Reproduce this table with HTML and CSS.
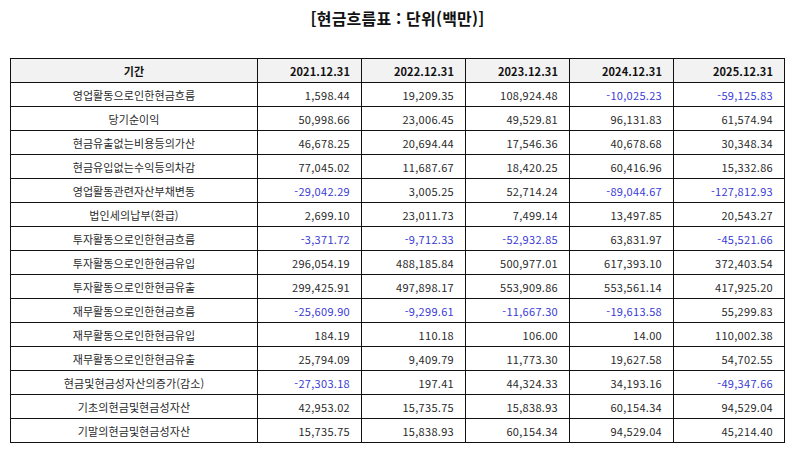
FILE: index.html
```html
<!DOCTYPE html>
<html lang="ko">
<head>
<meta charset="utf-8">
<title>현금흐름표</title>
<link rel="stylesheet" href="styles.css">
</head>
<body>
<div class="page">
  <h1 class="title">[현금흐름표 : 단위(백만)]</h1>
  <table class="cf">
    <colgroup>
      <col class="c-label"><col class="c-y"><col class="c-y"><col class="c-y"><col class="c-y"><col class="c-last">
    </colgroup>
    <thead>
      <tr><th class="lbl">기간</th><th>2021.12.31</th><th>2022.12.31</th><th>2023.12.31</th><th>2024.12.31</th><th>2025.12.31</th></tr>
    </thead>
    <tbody>
      <tr><td class="lbl">영업활동으로인한현금흐름</td><td>1,598.44</td><td>19,209.35</td><td>108,924.48</td><td class="neg">-10,025.23</td><td class="neg">-59,125.83</td></tr>
      <tr><td class="lbl">당기순이익</td><td>50,998.66</td><td>23,006.45</td><td>49,529.81</td><td>96,131.83</td><td>61,574.94</td></tr>
      <tr><td class="lbl">현금유출없는비용등의가산</td><td>46,678.25</td><td>20,694.44</td><td>17,546.36</td><td>40,678.68</td><td>30,348.34</td></tr>
      <tr><td class="lbl">현금유입없는수익등의차감</td><td>77,045.02</td><td>11,687.67</td><td>18,420.25</td><td>60,416.96</td><td>15,332.86</td></tr>
      <tr><td class="lbl">영업활동관련자산부채변동</td><td class="neg">-29,042.29</td><td>3,005.25</td><td>52,714.24</td><td class="neg">-89,044.67</td><td class="neg">-127,812.93</td></tr>
      <tr><td class="lbl">법인세의납부(환급)</td><td>2,699.10</td><td>23,011.73</td><td>7,499.14</td><td>13,497.85</td><td>20,543.27</td></tr>
      <tr><td class="lbl">투자활동으로인한현금흐름</td><td class="neg">-3,371.72</td><td class="neg">-9,712.33</td><td class="neg">-52,932.85</td><td>63,831.97</td><td class="neg">-45,521.66</td></tr>
      <tr><td class="lbl">투자활동으로인한현금유입</td><td>296,054.19</td><td>488,185.84</td><td>500,977.01</td><td>617,393.10</td><td>372,403.54</td></tr>
      <tr><td class="lbl">투자활동으로인한현금유출</td><td>299,425.91</td><td>497,898.17</td><td>553,909.86</td><td>553,561.14</td><td>417,925.20</td></tr>
      <tr><td class="lbl">재무활동으로인한현금흐름</td><td class="neg">-25,609.90</td><td class="neg">-9,299.61</td><td class="neg">-11,667.30</td><td class="neg">-19,613.58</td><td>55,299.83</td></tr>
      <tr><td class="lbl">재무활동으로인한현금유입</td><td>184.19</td><td>110.18</td><td>106.00</td><td>14.00</td><td>110,002.38</td></tr>
      <tr><td class="lbl">재무활동으로인한현금유출</td><td>25,794.09</td><td>9,409.79</td><td>11,773.30</td><td>19,627.58</td><td>54,702.55</td></tr>
      <tr><td class="lbl">현금및현금성자산의증가(감소)</td><td class="neg">-27,303.18</td><td>197.41</td><td>44,324.33</td><td>34,193.16</td><td class="neg">-49,347.66</td></tr>
      <tr><td class="lbl">기초의현금및현금성자산</td><td>42,953.02</td><td>15,735.75</td><td>15,838.93</td><td>60,154.34</td><td>94,529.04</td></tr>
      <tr><td class="lbl">기말의현금및현금성자산</td><td>15,735.75</td><td>15,838.93</td><td>60,154.34</td><td>94,529.04</td><td>45,214.40</td></tr>
    </tbody>
  </table>
</div>
</body>
</html>
```

FILE: styles.css
```css
html, body {
  margin: 0;
  padding: 0;
  background: #ffffff;
}
body {
  font-family: "Noto Sans CJK KR", "Noto Sans", sans-serif;
  color: #2a2a2a;
}
.page {
  padding: 0 9px 0 10px;
}
.title {
  margin: 0;
  height: 58px;
  padding-top: 6px;
  box-sizing: border-box;
  font-size: 16px;
  line-height: 24px;
  font-weight: 700;
  text-align: center;
  color: #111111;
  letter-spacing: 0.2px;
}
.cf {
  width: 775px;
  border-collapse: collapse;
  table-layout: fixed;
  font-size: 11px;
}
.c-label { width: 247px; }
.c-y { width: 104px; }
.c-last { width: 111px; }
.cf tr {
  height: 24px;
}
.cf th, .cf td {
  border: 1px solid #111111;
  padding: 0 11px 0 6px;
  line-height: 14px;
  text-align: right;
  white-space: nowrap;
  letter-spacing: 0.3px;
}
.cf thead th {
  background: #f2f2f2;
  font-weight: 700;
  color: #111111;
  letter-spacing: 0.1px;
}
.cf .lbl {
  text-align: center;
  padding: 0 6px;
  letter-spacing: 0.1px;
}
.cf .neg {
  color: #3a3ad6;
}
```
